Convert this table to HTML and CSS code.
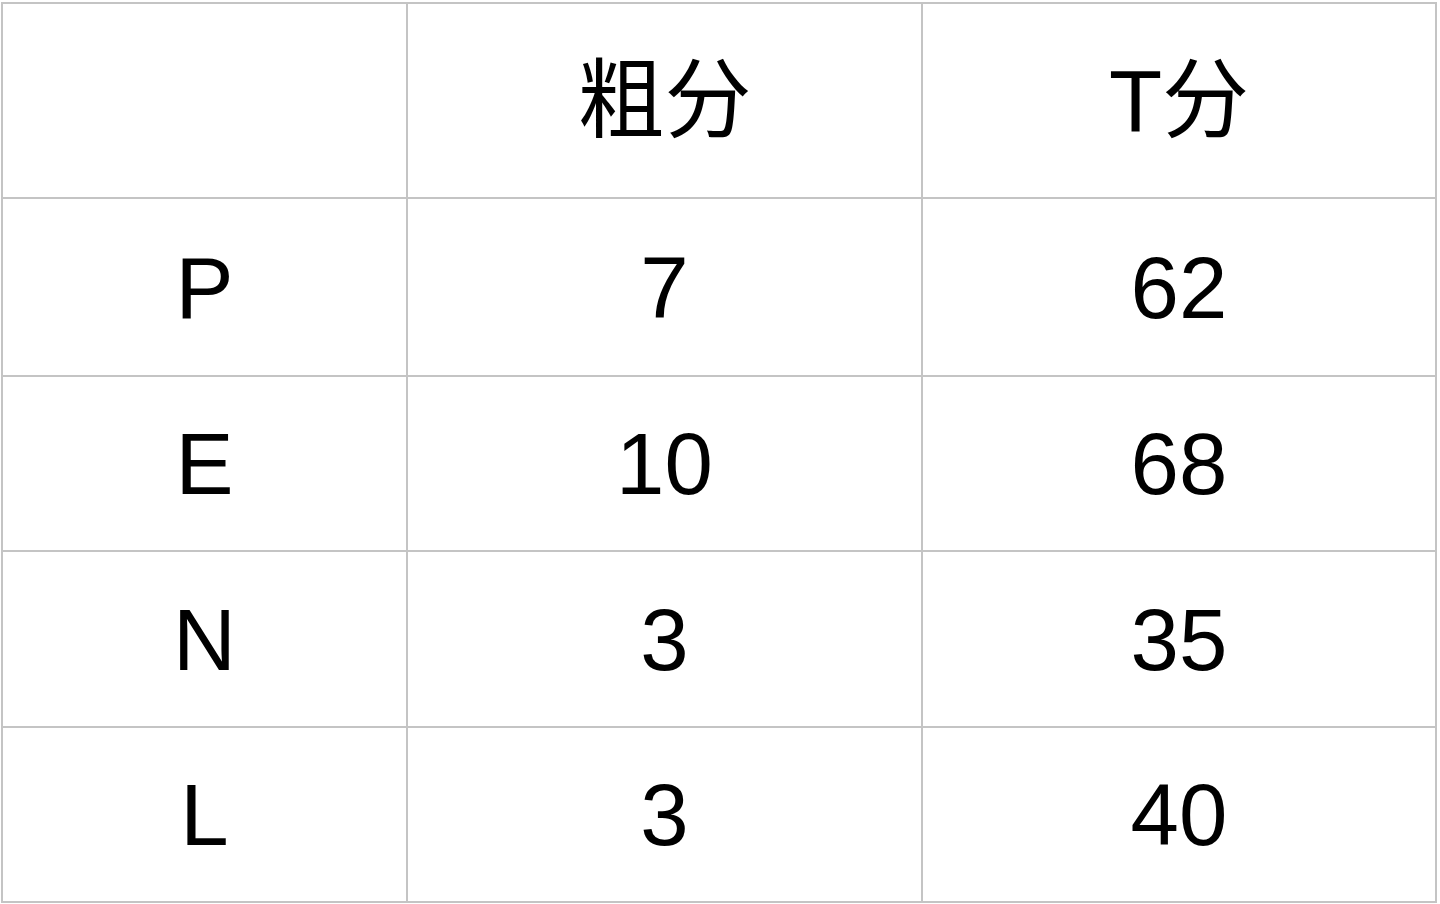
FILE: index.html
```html
<!DOCTYPE html>
<html lang="zh">
<head>
<meta charset="utf-8">
<link rel="stylesheet" href="styles.css">
</head>
<body>
<table class="score-table">
  <colgroup>
    <col class="c1">
    <col class="c2">
    <col class="c3">
  </colgroup>
  <tr class="head">
    <td></td>
    <td>粗分</td>
    <td>T分</td>
  </tr>
  <tr class="r1"><td>P</td><td>7</td><td>62</td></tr>
  <tr class="r2"><td>E</td><td>10</td><td>68</td></tr>
  <tr class="r3"><td>N</td><td>3</td><td>35</td></tr>
  <tr class="r4"><td>L</td><td>3</td><td>40</td></tr>
</table>
</body>
</html>
```

FILE: styles.css
```css
html, body {
  margin: 0;
  padding: 0;
  background: #ffffff;
}
.score-table {
  margin: 2px 0 0 1px;
  border-collapse: collapse;
  table-layout: fixed;
  width: 1436px;
  font-family: "Liberation Sans", Arial, "Noto Sans CJK SC", sans-serif;
  font-size: 87px;
  color: #000;
}
.c1 { width: 405px; }
.c2 { width: 515px; }
.c3 { width: 514px; }
.score-table td {
  border: 2px solid #c4c4c4;
  text-align: center;
  vertical-align: middle;
  padding: 0;
  line-height: 1;
}
.head td { height: 193px; font-family: "Liberation Sans", "Noto Sans CJK SC", sans-serif; }
.r1 td { height: 176px; }
.r2 td { height: 173px; }
.r3 td { height: 174px; }
.r4 td { height: 173px; }
```
